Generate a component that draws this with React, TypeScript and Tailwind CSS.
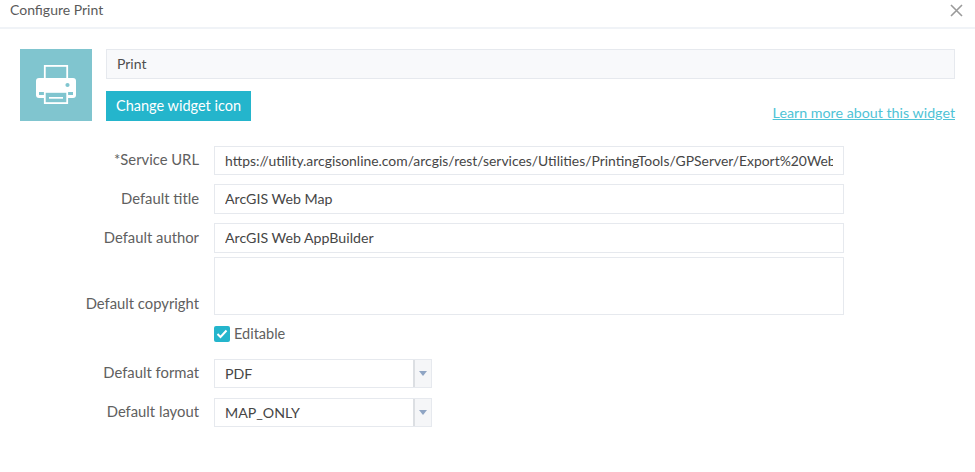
function Row({ label, value, className, valueClass, height }: { label: string; value: string; className: string; valueClass: string; height: string }) {
  return (
    <div className={`flex items-center ${className}`}>
      <div className="w-[199px] pb-[2px] text-right text-[14.8px] leading-none text-[#606060]">{label}</div>
      <div className={`ml-[15px] flex w-[630px] items-center whitespace-nowrap border border-[#e6e9ee] bg-white pl-[10px] pr-[10px] text-[#464646] ${height} ${valueClass}`}>
        <span className="block w-full overflow-hidden">{value}</span>
      </div>
    </div>
  );
}

function Select({ label, value, className }: { label: string; value: string; className: string }) {
  return (
    <div className={`flex items-center ${className}`}>
      <div className="w-[199px] pb-[2px] text-right text-[14.8px] leading-none text-[#606060]">{label}</div>
      <div className="ml-[15px] flex h-[29px] w-[218px] items-stretch border border-[#e6e9ee] bg-white">
        <div className="flex flex-1 items-center pl-[10px] text-[14.2px] text-[#464646]">{value}</div>
        <div className="flex w-[18px] items-center justify-center border-l-2 border-[#dcdfe3] bg-[#f5f6f8]">
          <svg width="8" height="5" viewBox="0 0 8 5"><path d="M0 0h8L4 5z" fill="#8fa5c4" /></svg>
        </div>
      </div>
    </div>
  );
}

export default function App() {
  return (
    <div className="h-[472px] w-[975px] overflow-hidden bg-white font-['Lato','Noto_Sans',sans-serif]">
      <div className="flex h-[29px] items-start justify-between border-b-2 border-[#f0f3f7] pl-[10px] pr-[12px]">
        <span className="pt-[1px] text-[14px] leading-[18px] text-[#5a5a5a]">Configure Print</span>
        <svg className="mt-[4px]" width="13" height="13" viewBox="0 0 13 13">
          <path d="M1 1l11 11M12 1L1 12" stroke="#9a9a9a" strokeWidth="1.6" fill="none" />
        </svg>
      </div>

      <div className="flex pl-[20px] pr-[20px] pt-[20px]">
        <div className="flex h-[72px] w-[72px] items-center justify-center bg-[#80c5cf]">
          <svg className="mt-[-1px]" width="40" height="39" viewBox="0 0 40 39" fill="none">
            <rect x="8.800" y="0.900" width="22.400" height="14" fill="none" stroke="#fff" strokeWidth="1.800" />
            <path d="M3 13h34a3 3 0 0 1 3 3v14a3 3 0 0 1-3 3H3a3 3 0 0 1-3-3V16a3 3 0 0 1 3-3z" fill="#fff" />
            <circle cx="31.500" cy="20" r="2.100" fill="#80c5cf" />
            <path d="M3 27h5v3H3zM32 27h5v3h-5z" fill="#80c5cf" />
            <rect x="8.800" y="26.900" width="22.400" height="11.200" fill="#80c5cf" stroke="#fff" strokeWidth="1.800" />
            <path d="M13 32h14v1.700H13z" fill="#fff" />
          </svg>
        </div>
        <div className="ml-[14px] flex-1">
          <div className="flex h-[30px] items-center border border-[#e6e9ee] bg-[#f8f9fb] pb-[2px] pl-[10px] text-[14px] text-[#4f4f4f]">Print</div>
          <div className="mt-[12px] flex items-end justify-between">
            <div className="flex h-[30px] w-[145px] items-center justify-center bg-[#24b5cc] text-[14.5px] text-white">Change widget icon</div>
            <a className="mb-[-1px] text-[14.25px] leading-[18px] text-[#4fc3d6] underline">Learn more about this widget</a>
          </div>
        </div>
      </div>

      <Row className="mt-[25px]" height="h-[29px]" valueClass="pt-[1px] text-[13.9px]" label="*Service URL" value="https://utility.arcgisonline.com/arcgis/rest/services/Utilities/PrintingTools/GPServer/Export%20Web%20Map%20Task" />
      <Row className="mt-[9px]" height="h-[30px]" valueClass="text-[14.2px]" label="Default title" value="ArcGIS Web Map" />
      <Row className="mt-[9px]" height="h-[30px]" valueClass="text-[14.2px]" label="Default author" value="ArcGIS Web AppBuilder" />

      <div className="mt-[4px] flex items-end">
        <div className="w-[199px] pb-[3px] text-right text-[14.8px] leading-[18px] text-[#606060]">Default copyright</div>
        <div className="ml-[15px] h-[58px] w-[630px] border border-[#e6e9ee] bg-white" />
      </div>

      <div className="ml-[214px] mt-[11px] flex items-center">
        <div className="flex h-[16px] w-[16px] items-center justify-center rounded-[2px] bg-[#24b5cc]">
          <svg width="12" height="10" viewBox="0 0 12 10" fill="none"><path d="M1.500 5l3 3 6-6.500" stroke="#fff" strokeWidth="2" /></svg>
        </div>
        <span className="ml-[4px] text-[14.5px] leading-[16px] text-[#606060]">Editable</span>
      </div>

      <Select className="mt-[17px]" label="Default format" value="PDF" />
      <Select className="mt-[10px]" label="Default layout" value="MAP_ONLY" />
    </div>
  );
}
